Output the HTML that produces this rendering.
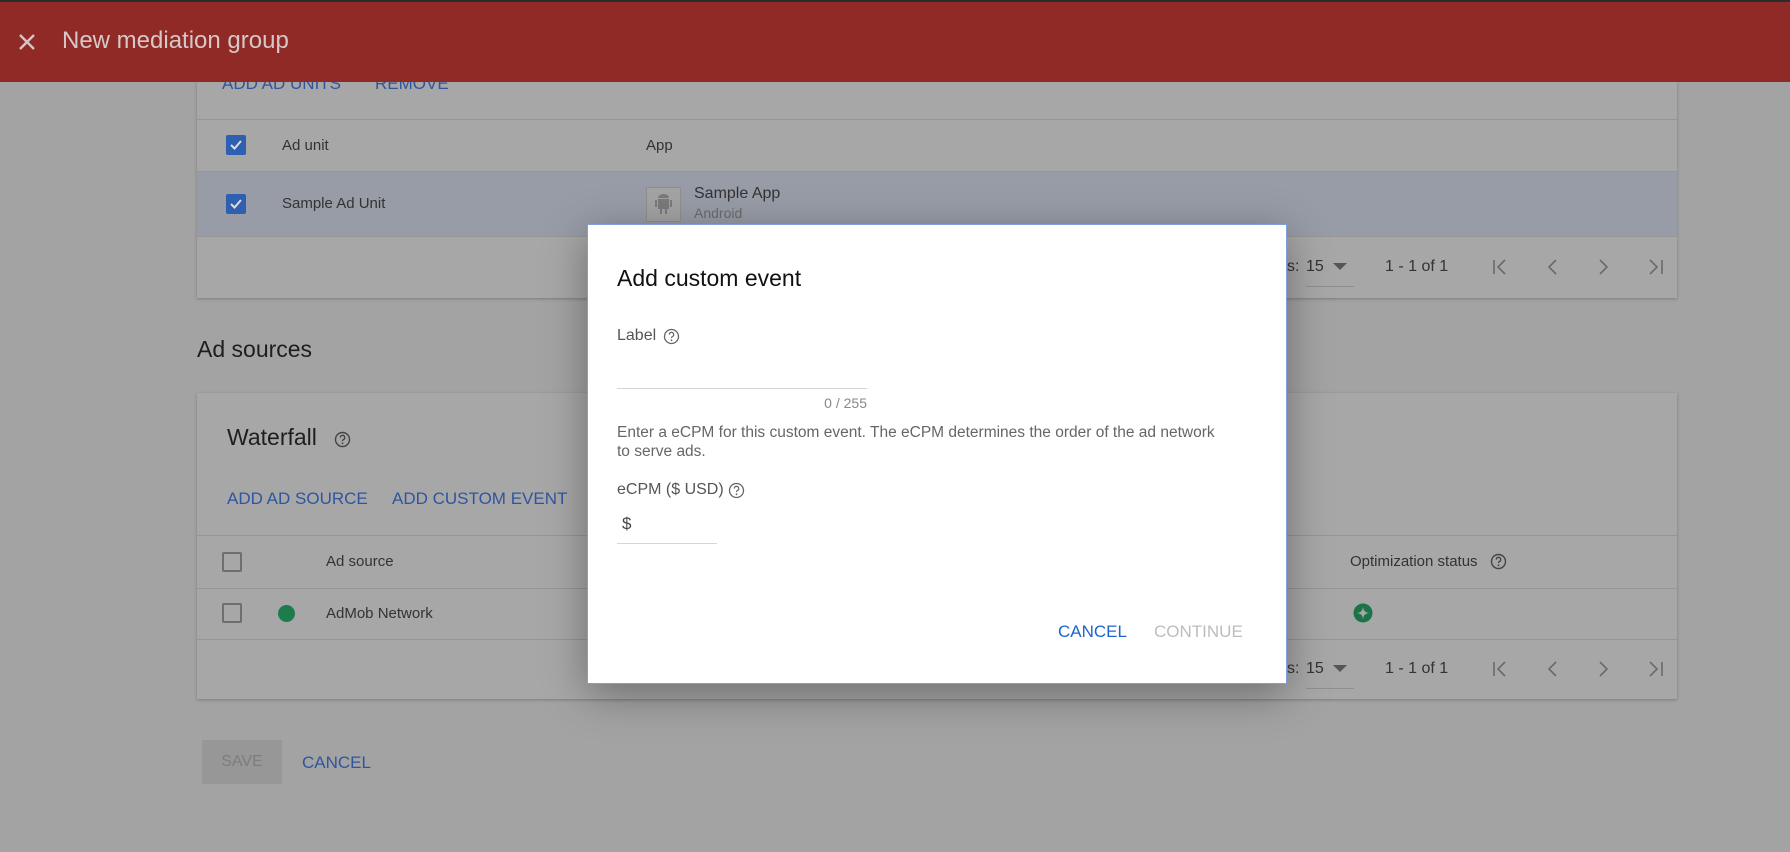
<!DOCTYPE html>
<html><head><meta charset="utf-8"><style>
*{box-sizing:border-box;margin:0;padding:0}
body{width:1790px;height:852px;overflow:hidden;background:#a3a3a3;font-family:"Liberation Sans",Arial,sans-serif;position:relative;color:#2a2a2a}
.a{position:absolute;white-space:nowrap}
.card{position:absolute;left:197px;width:1480px;background:#a7a7a7;box-shadow:0 1px 3px rgba(0,0,0,.25)}
.cb{position:absolute;width:20px;height:20px;border-radius:2px}
.cbon{background:#2f5fb0}
.cboff{border:2px solid #6e6e6e}
.t{font-size:15px;color:#333}
.blue{color:#2f55a0;font-size:17px}
</style></head><body>

<div class="card" style="top:60px;height:238px">
  <div class="a blue" style="left:25px;top:14px">ADD AD UNITS</div>
  <div class="a blue" style="left:178px;top:14px">REMOVE</div>
</div>
<div class="a" style="left:0;top:0;width:1790px;height:2px;background:#2b2b2b"></div>
<div class="a" style="left:0;top:2px;width:1790px;height:80px;background:#8f2a27"></div>
<svg class="a" style="left:17px;top:32px" width="20" height="20" viewBox="0 0 20 20"><path d="M3 3L17 17M17 3L3 17" stroke="#d7c6c5" stroke-width="2.4"/></svg>
<div class="a" style="left:62px;top:27px;font-size:24px;color:#d7c8c7">New mediation group</div>

<div class="a" style="left:197px;top:119px;width:1480px;height:1px;background:#959595"></div>
<div class="cb cbon a" style="left:226px;top:135px"><svg width="20" height="20"><path d="M5 10l3.5 3.5L15 6" stroke="#ddd" stroke-width="2" fill="none"/></svg></div>
<div class="a t" style="left:282px;top:137px">Ad unit</div>
<div class="a t" style="left:646px;top:137px">App</div>
<div class="a" style="left:197px;top:171px;width:1480px;height:66px;background:#979ca6;border-top:1px solid #959595;border-bottom:1px solid #959595"></div>
<div class="cb cbon a" style="left:226px;top:194px"><svg width="20" height="20"><path d="M5 10l3.5 3.5L15 6" stroke="#ddd" stroke-width="2" fill="none"/></svg></div>
<div class="a t" style="left:282px;top:195px">Sample Ad Unit</div>
<div class="a" style="left:646px;top:187px;width:35px;height:35px;background:#a3a3a3;border:1px solid #8f8f8f"></div>
<svg class="a" style="left:654px;top:193px" width="19" height="23" viewBox="0 0 19 23"><path d="M4 6h11v10H4zM4 5a5.5 4 0 0 1 11 0zM1 7h2v7H1zM16 7h2v7h-2zM6 16h2v5H6zM11 16h2v5h-2z" fill="#7a7a7a"/></svg>
<div class="a" style="left:694px;top:185px;font-size:16px;color:#333">Sample App</div>
<div class="a" style="left:694px;top:205px;font-size:14px;color:#6a6a6a">Android</div>

<div class="a t" style="left:1287px;top:258px;font-size:16px">s:</div>
<div class="a t" style="left:1306px;top:258px;font-size:16px">15</div>
<svg class="a" style="left:1333px;top:263px" width="14" height="8"><path d="M0 0h14L7 7z" fill="#555"/></svg>
<div class="a" style="left:1306px;top:286px;width:48px;height:1px;background:#8f8f8f"></div>
<div class="a t" style="left:1385px;top:258px;font-size:16px">1 - 1 of 1</div>
<svg class="a" style="left:1490px;top:257px" width="190" height="20" viewBox="0 0 190 20"><g stroke="#6a6a6a" stroke-width="1.6" fill="none"><path d="M4 3v14M15 3l-7 7 7 7"/><path d="M66 3l-7 7 7 7"/><path d="M110 3l7 7-7 7"/><path d="M160 3l7 7-7 7M172 3v14"/></g></svg>

<div class="a" style="left:197px;top:336px;font-size:23px;color:#1e1e1e">Ad sources</div>

<div class="card" style="top:393px;height:306px"></div>
<div class="a" style="left:227px;top:424px;font-size:23px;color:#1e1e1e">Waterfall</div>
<svg class="a" style="left:334px;top:431px" width="17" height="17" viewBox="0 0 17 17"><circle cx="8.5" cy="8.5" r="7" stroke="#444" stroke-width="1.4" fill="none"/><path d="M6.3 6.6a2.2 2.2 0 1 1 3 2c-.6.3-.8.7-.8 1.5" stroke="#444" stroke-width="1.3" fill="none"/><circle cx="8.5" cy="12.3" r=".9" fill="#444"/></svg>
<div class="a blue" style="left:227px;top:489px">ADD AD SOURCE</div>
<div class="a blue" style="left:392px;top:489px">ADD CUSTOM EVENT</div>
<div class="a" style="left:197px;top:535px;width:1480px;height:1px;background:#959595"></div>
<div class="cb cboff a" style="left:222px;top:552px"></div>
<div class="a t" style="left:326px;top:553px">Ad source</div>
<div class="a t" style="left:1350px;top:553px">Optimization status</div>
<svg class="a" style="left:1490px;top:553px" width="17" height="17" viewBox="0 0 17 17"><circle cx="8.5" cy="8.5" r="7" stroke="#444" stroke-width="1.4" fill="none"/><path d="M6.3 6.6a2.2 2.2 0 1 1 3 2c-.6.3-.8.7-.8 1.5" stroke="#444" stroke-width="1.3" fill="none"/><circle cx="8.5" cy="12.3" r=".9" fill="#444"/></svg>
<div class="a" style="left:197px;top:588px;width:1480px;height:1px;background:#959595"></div>
<div class="cb cboff a" style="left:222px;top:603px"></div>
<div class="a" style="left:278px;top:605px;width:17px;height:17px;border-radius:50%;background:#1d7b4c"></div>
<div class="a t" style="left:326px;top:605px">AdMob Network</div>
<svg class="a" style="left:1353px;top:603px" width="20" height="20" viewBox="0 0 20 20"><circle cx="10" cy="10" r="9.5" fill="#1b7447"/><path d="M10 4Q10.5 9.5 16 10Q10.5 10.5 10 16Q9.5 10.5 4 10Q9.5 9.5 10 4z" fill="#a7a7a7"/></svg>
<div class="a" style="left:197px;top:639px;width:1480px;height:1px;background:#959595"></div>
<div class="a t" style="left:1287px;top:660px;font-size:16px">s:</div>
<div class="a t" style="left:1306px;top:660px;font-size:16px">15</div>
<svg class="a" style="left:1333px;top:665px" width="14" height="8"><path d="M0 0h14L7 7z" fill="#555"/></svg>
<div class="a" style="left:1306px;top:688px;width:48px;height:1px;background:#8f8f8f"></div>
<div class="a t" style="left:1385px;top:660px;font-size:16px">1 - 1 of 1</div>
<svg class="a" style="left:1490px;top:659px" width="190" height="20" viewBox="0 0 190 20"><g stroke="#6a6a6a" stroke-width="1.6" fill="none"><path d="M4 3v14M15 3l-7 7 7 7"/><path d="M66 3l-7 7 7 7"/><path d="M110 3l7 7-7 7"/><path d="M160 3l7 7-7 7M172 3v14"/></g></svg>

<div class="a" style="left:202px;top:740px;width:80px;height:44px;background:#979797;color:#7d7d7d;font-size:16px;text-align:center;line-height:44px">SAVE</div>
<div class="a blue" style="left:302px;top:753px">CANCEL</div>

<div class="a" style="left:587px;top:224px;width:700px;height:460px;background:#fff;border:1px solid #7f9fdc;box-shadow:0 10px 40px rgba(0,0,0,.35)">
  <div class="a" style="left:29px;top:40px;font-size:23px;color:#111">Add custom event</div>
  <div class="a" style="left:29px;top:102px;font-size:16px;color:#555">Label</div>
  <svg class="a" style="left:75px;top:103px" width="17" height="17" viewBox="0 0 17 17"><circle cx="8.5" cy="8.5" r="7" stroke="#666" stroke-width="1.3" fill="none"/><path d="M6.3 6.6a2.2 2.2 0 1 1 3 2c-.6.3-.8.7-.8 1.5" stroke="#666" stroke-width="1.2" fill="none"/><circle cx="8.5" cy="12.3" r=".9" fill="#666"/></svg>
  <div class="a" style="left:29px;top:163px;width:250px;height:1px;background:#d6d6d6"></div>
  <div class="a" style="left:29px;top:170px;width:250px;text-align:right;font-size:14px;color:#888">0 / 255</div>
  <div class="a" style="left:29px;top:198px;font-size:15.5px;color:#666;line-height:19px;white-space:normal;width:606px">Enter a eCPM for this custom event. The eCPM determines the order of the ad network to serve ads.</div>
  <div class="a" style="left:29px;top:256px;font-size:16px;color:#555">eCPM ($ USD)</div>
  <svg class="a" style="left:140px;top:257px" width="17" height="17" viewBox="0 0 17 17"><circle cx="8.5" cy="8.5" r="7" stroke="#666" stroke-width="1.3" fill="none"/><path d="M6.3 6.6a2.2 2.2 0 1 1 3 2c-.6.3-.8.7-.8 1.5" stroke="#666" stroke-width="1.2" fill="none"/><circle cx="8.5" cy="12.3" r=".9" fill="#666"/></svg>
  <div class="a" style="left:34px;top:289px;font-size:17px;color:#444">$</div>
  <div class="a" style="left:29px;top:318px;width:100px;height:1px;background:#d6d6d6"></div>
  <div class="a" style="left:470px;top:397px;font-size:17px;color:#1a66d0">CANCEL</div>
  <div class="a" style="left:566px;top:397px;font-size:17px;color:#bdbdbd">CONTINUE</div>
</div>
</body></html>
